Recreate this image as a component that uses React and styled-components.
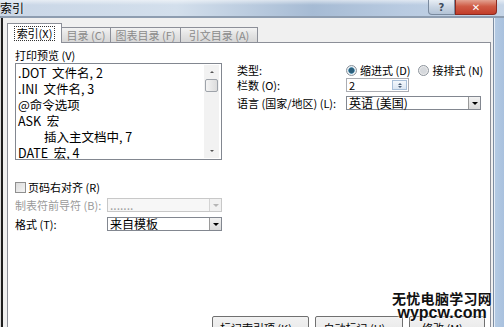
import React from 'react'
import styled, { createGlobalStyle } from 'styled-components'

const Global = createGlobalStyle`
  html, body { margin: 0; padding: 0; background: #f0f0f0; overflow: hidden; }
  body {
    font-family: "Noto Sans CJK SC", "Noto Sans", sans-serif;
    font-size: 12px;
    color: #000;
  }
`

const Window = styled.div`
  position: relative;
  width: 504px;
  height: 327px;
  overflow: hidden;
  display: flex;
  flex-direction: column;
  background: #f0f0f0;
`

const TitleBar = styled.div`
  height: 16px;
  flex: none;
  display: flex;
  align-items: center;
  background:
    linear-gradient(180deg, rgba(255,255,255,.55) 0, rgba(255,255,255,0) 5px),
    linear-gradient(90deg, #c9d6e6 0%, #d3dfec 35%, #a6bbd4 62%, #b9cbe1 80%, #c6d5e7 100%);
  border-bottom: 2px solid #8e9db0;
`

const Title = styled.div`
  font-size: 12px;
  line-height: 14px;
  color: #000;
  text-shadow: 0 0 3px rgba(255,255,255,.9);
`

const CaptionButtons = styled.div`
  margin-left: auto;
  margin-right: 7px;
  align-self: flex-start;
  display: flex;
`

const CaptionButton = styled.div`
  width: ${p => p.$w}px;
  height: 14px;
  display: flex;
  align-items: center;
  justify-content: center;
  font-family: "DejaVu Sans", sans-serif;
  font-size: 10px;
  font-weight: bold;
  color: ${p => (p.$close ? '#fff' : '#3d4b5c')};
  border: 1px solid ${p => (p.$close ? '#8a2a20' : '#7a8a9e')};
  border-top: none;
  background: ${p =>
    p.$close
      ? 'linear-gradient(180deg, #e3a291 0%, #cf5b45 45%, #c23d2a 100%)'
      : 'linear-gradient(180deg, #e8eef5 0%, #c9d5e3 50%, #b3c3d6 100%)'};
  border-radius: ${p => (p.$close ? '0 0 4px 0' : '0 0 0 4px')};
`

const Body = styled.div`
  flex: 1;
  display: flex;
  min-height: 0;
`

const LeftEdge = styled.div`
  width: 3px;
  flex: none;
  background: linear-gradient(90deg, #dcdcdc 0 1px, #1f1f1f 1px 3px);
`

const Main = styled.div`
  flex: 1;
  display: flex;
  flex-direction: column;
  padding: 5px 2px 0 4px;
  min-width: 0;
`

const RightEdge = styled.div`
  width: 10px;
  flex: none;
  border-left: 1px solid #7d8da2;
  background: linear-gradient(90deg, #e6eef7 0 1px, #b4cae3 1px, #a9c1de 100%);
`

const TabStrip = styled.div`
  display: flex;
  align-items: flex-end;
  height: 20px;
  margin-bottom: -1px;
  position: relative;
  z-index: 1;
`

const Tab = styled.div`
  width: ${p => p.$w}px;
  height: ${p => (p.$active ? 20 : 16)}px;
  box-sizing: border-box;
  display: flex;
  align-items: center;
  justify-content: center;
  border: 1px solid #8c8f98;
  border-bottom: ${p => (p.$active ? 'none' : '1px solid #8c8f98')};
  border-left: ${p => (p.$first || p.$active ? '1px solid #8c8f98' : 'none')};
  background: ${p => (p.$active ? '#fff' : 'linear-gradient(180deg, #f3f3f3 0%, #e3e3e3 50%, #d7d7d7 100%)')};
  color: ${p => (p.$active ? '#000' : '#8a8a8a')};
  font-size: 11px;
  line-height: 13px;
  white-space: pre;
`

const FocusLabel = styled.span`
  border: 1px dotted #333;
  padding: 0 2px;
  line-height: 13px;
`

const Panel = styled.div`
  flex: 1;
  background: #fff;
  border: 1px solid #8c8f98;
  border-bottom: none;
  padding: 5px 0 0 7px;
  display: flex;
  flex-direction: column;
`

const TopSection = styled.div`
  display: grid;
  grid-template-columns: 207px 244px;
  column-gap: 15px;
`

const Label = styled.div`
  font-size: 11px;
  line-height: 14px;
  height: 14px;
  white-space: pre;
  color: ${p => (p.$disabled ? '#9a9a9a' : '#000')};
`

const ListBox = styled.div`
  margin-top: 1px;
  height: 97px;
  box-sizing: border-box;
  border: 1px solid #828790;
  display: flex;
  overflow: hidden;
`

const ListItems = styled.div`
  flex: 1;
  padding: 1px 0 0 2px;
`

const ListItem = styled.div`
  height: 16px;
  line-height: 16px;
  font-size: 12.5px;
  padding-left: ${p => (p.$indent ? 26 : 0)}px;
  white-space: pre;
`

const ScrollBar = styled.div`
  width: 15px;
  margin: 1px 2px 1px 0;
  background: #f2f2f2;
  display: flex;
  flex-direction: column;
  align-items: center;
`

const ScrollArrow = styled.div`
  height: 14px;
  width: 100%;
  display: flex;
  align-items: center;
  justify-content: center;
`

const Triangle = styled.span`
  width: 0;
  height: 0;
  border-left: ${p => p.$s || 3}px solid transparent;
  border-right: ${p => p.$s || 3}px solid transparent;
  ${p => (p.$up ? 'border-bottom' : 'border-top')}: ${p => p.$s || 3}px solid ${p => p.$c || '#555'};
`

const ScrollThumb = styled.div`
  width: 13px;
  height: 13px;
  box-sizing: border-box;
  border: 1px solid #9ea3aa;
  border-radius: 2px;
  background: linear-gradient(90deg, #f4f4f4, #dcdcdc);
`

const ScrollTrack = styled.div`
  flex: 1;
`

const Options = styled.div`
  padding-top: 15px;
  display: flex;
  flex-direction: column;
`

const OptionRow = styled.div`
  display: grid;
  grid-template-columns: 109px auto;
  align-items: center;
  height: 14px;
  margin-top: ${p => p.$mt || 0}px;
`

const RadioGroup = styled.div`
  display: flex;
  align-items: center;
  gap: 8px;
`

const RadioItem = styled.div`
  display: flex;
  align-items: center;
  gap: 3px;
  font-size: 11px;
  line-height: 14px;
  white-space: pre;
`

const RadioCircle = styled.span`
  width: 11px;
  height: 11px;
  box-sizing: border-box;
  border-radius: 50%;
  border: 1px solid #8b939c;
  background: ${p =>
    p.$checked
      ? 'radial-gradient(circle, #2c5f7c 0 2.5px, #5c9ab8 3px, #e9eef2 3.5px)'
      : 'radial-gradient(circle, #d6d9dd 0 3px, #ececec 4px)'};
`

const Spinner = styled.div`
  width: 63px;
  height: 14px;
  box-sizing: border-box;
  border: 1px solid #abadb3;
  display: flex;
  align-items: center;
  font-size: 11px;
  line-height: 12px;
  padding-left: 2px;
`

const SpinButtons = styled.div`
  margin-left: auto;
  margin-right: 1px;
  width: 15px;
  height: 10px;
  box-sizing: border-box;
  border: 1px solid #a8bfd8;
  background: linear-gradient(180deg, #f4f8fc, #dbe6f2);
  display: flex;
  flex-direction: column;
  align-items: center;
  justify-content: center;
  gap: 1px;
`

const Select = styled.div`
  width: ${p => p.$w}px;
  height: 14px;
  box-sizing: border-box;
  border: 1px solid ${p => (p.$disabled ? '#c8c8c8' : '#828790')};
  background: ${p => (p.$disabled ? '#f7f7f7' : '#fff')};
  color: ${p => (p.$disabled ? '#a0a0a0' : '#000')};
  display: flex;
  align-items: center;
  padding-left: 2px;
  font-size: 12px;
  line-height: 12px;
  white-space: pre;
`

const DropButton = styled.div`
  margin-left: auto;
  width: 12px;
  height: 12px;
  box-sizing: border-box;
  border-left: 1px solid ${p => (p.$disabled ? '#d4d4d4' : '#9a9a9a')};
  background: ${p => (p.$disabled ? '#f1f1f1' : 'linear-gradient(180deg, #f2f2f2, #d9d9d9)')};
  display: flex;
  align-items: center;
  justify-content: center;
`

const LowerSection = styled.div`
  margin-top: 20px;
  display: flex;
  flex-direction: column;
`

const CheckRow = styled.label`
  display: flex;
  align-items: center;
  gap: 2px;
  height: 14px;
  font-size: 11px;
  white-space: pre;
`

const CheckBox = styled.span`
  width: 11px;
  height: 11px;
  box-sizing: border-box;
  border: 1px solid #8f8f8f;
  background: linear-gradient(135deg, #dcdcdc, #f4f4f4);
`

const FieldRow = styled.div`
  display: grid;
  grid-template-columns: 92px 115px;
  align-items: center;
  height: 14px;
  margin-top: ${p => p.$mt}px;
`

const ButtonRow = styled.div`
  margin-top: 85px;
  padding-left: 197px;
  display: flex;
  gap: 6px;
`

const PushButton = styled.div`
  width: ${p => p.$w}px;
  height: 23px;
  box-sizing: border-box;
  border: 1px solid #707070;
  border-radius: 2px;
  background: linear-gradient(180deg, #f2f2f2 0%, #ebebeb 50%, #dddddd 51%, #cfcfcf 100%);
  display: flex;
  align-items: center;
  justify-content: center;
  font-size: 11px;
  white-space: pre;
`

const Watermark = styled.div`
  position: absolute;
  left: 392px;
  top: 291px;
  display: flex;
  flex-direction: column;
  align-items: center;
  color: #111;
  text-shadow: 0 0 2px #fff, 0 0 2px #fff;
`

const WatermarkCn = styled.div`
  font-size: 14px;
  line-height: 15px;
  font-weight: bold;
  letter-spacing: 0.3px;
`

const WatermarkEn = styled.div`
  font-family: "Liberation Sans", Arial, sans-serif;
  font-size: 16px;
  line-height: 13px;
  font-weight: bold;
`

const items = [
  { text: '.DOT  文件名, 2' },
  { text: '.INI  文件名, 3' },
  { text: '@命令选项' },
  { text: 'ASK  宏' },
  { text: '插入主文档中, 7', indent: true },
  { text: 'DATE  宏, 4' },
]

function Dropdown({ w, disabled, children }) {
  return (
    <Select $w={w} $disabled={disabled}>
      {children}
      <DropButton $disabled={disabled}>
        <Triangle $c={disabled ? '#b5b5b5' : '#000'} />
      </DropButton>
    </Select>
  )
}

export default function App() {
  return (
    <>
      <Global />
      <Window>
        <TitleBar>
          <Title>索引</Title>
          <CaptionButtons>
            <CaptionButton $w={25}>?</CaptionButton>
            <CaptionButton $w={40} $close>✕</CaptionButton>
          </CaptionButtons>
        </TitleBar>
        <Body>
          <LeftEdge />
          <Main>
            <TabStrip>
              <Tab $w={55} $active $first>
                <FocusLabel>索引(X)</FocusLabel>
              </Tab>
              <Tab $w={49}>目录 (C)</Tab>
              <Tab $w={70}>图表目录 (F)</Tab>
              <Tab $w={77}>引文目录 (A)</Tab>
            </TabStrip>
            <Panel>
              <TopSection>
                <div>
                  <Label>打印预览 (V)</Label>
                  <ListBox>
                    <ListItems>
                      {items.map(it => (
                        <ListItem key={it.text} $indent={it.indent}>{it.text}</ListItem>
                      ))}
                    </ListItems>
                    <ScrollBar>
                      <ScrollArrow><Triangle $up $s={2.5} /></ScrollArrow>
                      <ScrollThumb />
                      <ScrollTrack />
                      <ScrollArrow><Triangle $s={2.5} /></ScrollArrow>
                    </ScrollBar>
                  </ListBox>
                </div>
                <Options>
                  <OptionRow>
                    <Label>类型:</Label>
                    <RadioGroup>
                      <RadioItem><RadioCircle $checked />缩进式 (D)</RadioItem>
                      <RadioItem><RadioCircle />接排式 (N)</RadioItem>
                    </RadioGroup>
                  </OptionRow>
                  <OptionRow $mt={1}>
                    <Label>栏数 (O):</Label>
                    <Spinner>
                      2
                      <SpinButtons>
                        <Triangle $up $s={2} $c="#4d6078" />
                        <Triangle $s={2} $c="#4d6078" />
                      </SpinButtons>
                    </Spinner>
                  </OptionRow>
                  <OptionRow $mt={4}>
                    <Label>语言 (国家/地区) (L):</Label>
                    <Dropdown w={135}>英语 (美国)</Dropdown>
                  </OptionRow>
                </Options>
              </TopSection>
              <LowerSection>
                <CheckRow>
                  <CheckBox />
                  页码右对齐 (R)
                </CheckRow>
                <FieldRow $mt={4}>
                  <Label $disabled>制表符前导符 (B):</Label>
                  <Dropdown w={115} disabled>.......</Dropdown>
                </FieldRow>
                <FieldRow $mt={5}>
                  <Label>格式 (T):</Label>
                  <Dropdown w={115}>来自模板</Dropdown>
                </FieldRow>
              </LowerSection>
              <ButtonRow>
                <PushButton $w={97}>标记索引项 (K)...</PushButton>
                <PushButton $w={88}>自动标记 (U)...</PushButton>
                <PushButton $w={76}>修改 (M)...</PushButton>
              </ButtonRow>
            </Panel>
          </Main>
          <RightEdge />
        </Body>
        <Watermark>
          <WatermarkCn>无忧电脑学习网</WatermarkCn>
          <WatermarkEn>wypcw.com</WatermarkEn>
        </Watermark>
      </Window>
    </>
  )
}
